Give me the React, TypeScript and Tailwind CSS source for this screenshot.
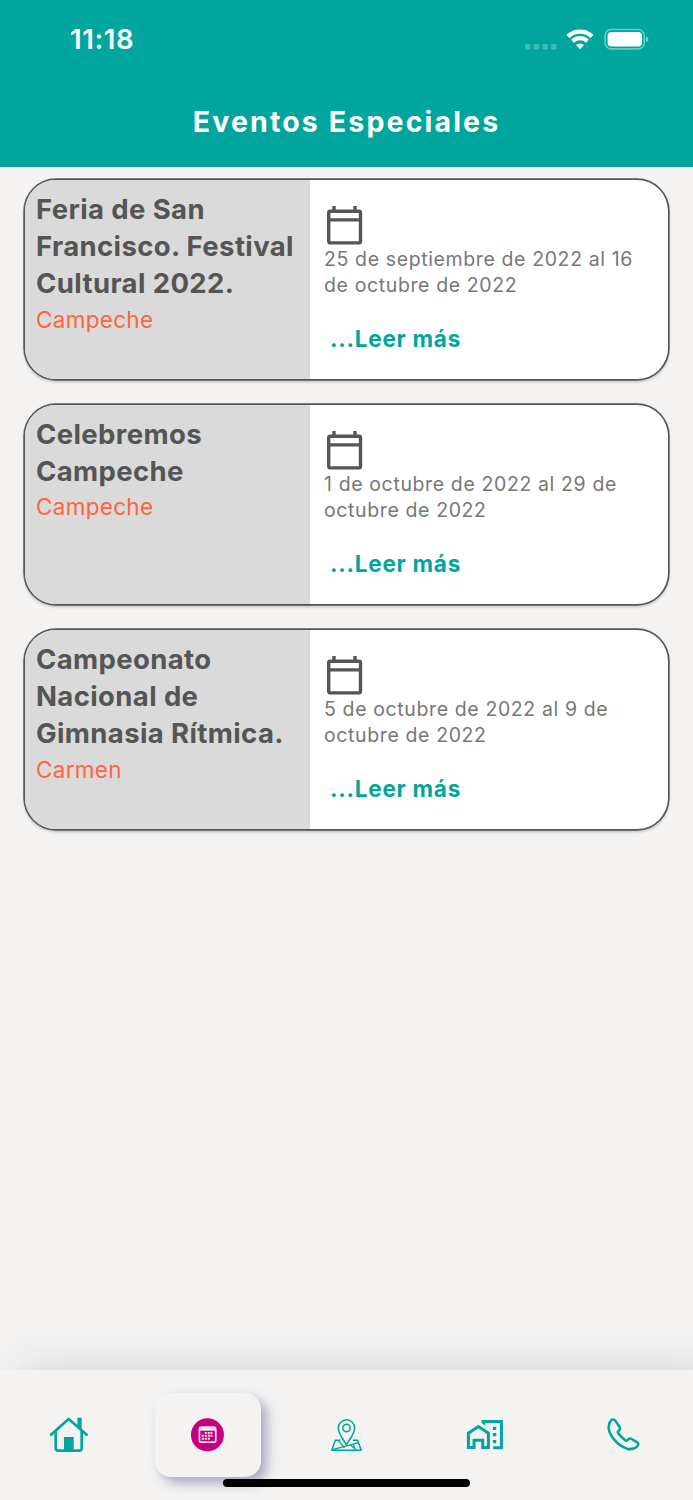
import type { ReactNode } from "react";

const events = [
  {
    id: 1,
    title: ["Feria de San", "Francisco. Festival", "Cultural 2022."],
    city: "Campeche",
    date: ["25 de septiembre de 2022 al 16", "de octubre de 2022"],
  },
  {
    id: 2,
    title: ["Celebremos", "Campeche"],
    city: "Campeche",
    date: ["1 de octubre de 2022 al 29 de", "octubre de 2022"],
  },
  {
    id: 3,
    title: ["Campeonato", "Nacional de", "Gimnasia Rítmica."],
    city: "Carmen",
    date: ["5 de octubre de 2022 al 9 de", "octubre de 2022"],
  },
];

const StatusBar = () => {
  return (
    <div className="flex h-[78px] items-center justify-between pl-[70px] pr-[44px]">
      <span className="pt-[2px] text-[27.5px] leading-none font-semibold tracking-[0.6px]">11:18</span>
      <div className="flex items-center">
        <svg width="32" height="8" viewBox="0 0 32 8" className="mt-[15px] mr-[9px]" fill="#fff" fillOpacity="0.25">
          <rect x="0" y="1" width="5.4" height="5.4" rx="1.3" />
          <rect x="8.7" y="1" width="5.4" height="5.4" rx="1.3" />
          <rect x="17.4" y="1" width="5.4" height="5.4" rx="1.3" />
          <rect x="26" y="1" width="5.4" height="5.4" rx="1.3" />
        </svg>
        <svg width="28" height="22" viewBox="0 0 28 22" className="mr-[10px]" fill="none" stroke="#fff" strokeWidth="4.2">
          <path d="M2 8.500a17.200 17.200 0 0 1 24 0" />
          <path d="M6.600 13.200a10.600 10.600 0 0 1 14.800 0" />
          <path d="M14 21.300l-4-4.300a6 6 0 0 1 8 0z" fill="#fff" stroke="none" />
        </svg>
        <svg width="45" height="22" viewBox="0 0 45 22">
          <rect x="1.2" y="1.5" width="39" height="19.4" rx="6" fill="none" stroke="#fff" strokeOpacity="0.4" strokeWidth="1.6" />
          <rect x="3.6" y="4" width="34.4" height="14.6" rx="3.8" fill="#fff" />
          <path d="M41.900 8.300c3 1 3 5 0 6z" fill="#fff" fillOpacity="0.5" />
        </svg>
      </div>
    </div>
  );
};

const CalendarIcon = () => {
  return (
    <svg width="37" height="39" viewBox="0 0 37 39" fill="none" stroke="#555" strokeWidth="3.4">
      <rect x="2.7" y="5.3" width="31.8" height="31.6" rx="1.6" />
      <path d="M2.7 13.900h31.800M8 0v5M29 0v5" />
    </svg>
  );
};

const EventCard = ({ event }: { event: (typeof events)[number] }) => {
  return (
    <div className="flex h-[199px] overflow-hidden rounded-[31px] bg-white shadow-[0_0_0_1.7px_#575557,0_2px_3px_1px_rgba(0,0,0,0.22)]">
      <div className="w-[285px] shrink-0 bg-[#dadada] pt-[11px] pl-[11px]">
        <h2 className="text-[27.5px] leading-[37.2px] font-bold whitespace-nowrap tracking-[0.38px] text-[#555]">
          {event.title.map((line) => (
            <span className="block" key={line}>
              {line}
            </span>
          ))}
        </h2>
        <p className="-mt-[1px] text-[22.5px] leading-[35px] tracking-[0.3px] text-[#ff6340]">{event.city}</p>
      </div>
      <div className="pt-[26px] pl-[14px]">
        <div className="pl-[2px]">
          <CalendarIcon />
        </div>
        <p className="mt-[1px] text-[19.5px] leading-[26px] whitespace-nowrap tracking-[0.62px] text-[#777]">
          {event.date.map((line) => (
            <span className="block" key={line}>
              {line}
            </span>
          ))}
        </p>
        <button className="mt-[26px] ml-[6px] block text-[22.5px] leading-[30px] font-bold tracking-[0.75px] text-[#00a59e]">
          ...Leer más
        </button>
      </div>
    </div>
  );
};

const NavItem = ({ active, label, children }: { active?: boolean; label: string; children: ReactNode }) => {
  return (
    <div className="flex flex-1 items-center justify-center">
      <button
        aria-label={label}
        className={
          active
            ? "flex h-[84px] w-[106px] items-center justify-center rounded-2xl bg-[#f4f3f2] shadow-[6px_6px_12px_rgba(70,65,125,0.42)]"
            : "flex h-[84px] w-[106px] items-center justify-center"
        }
      >
        {children}
      </button>
    </div>
  );
};

const NavBar = () => {
  return (
    <nav className="relative flex h-[130px] bg-[#f4f3f2] shadow-[20px_-3px_44px_rgba(70,55,105,0.16)]">
      <NavItem label="Inicio">
        <svg width="60" height="60" viewBox="-2.1 15 180 180" fill="none" stroke="#00a59e" strokeWidth="8" strokeLinejoin="round" strokeLinecap="round">
          <path d="M34 104L87 57l54 47" />
          <path d="M48 95v50q0 7 7 7h64q7 0 7-7V95" />
          <path d="M73 111h29v42H73zM113 53h13v36l-13-12z" fill="#00a59e" stroke="none" />
        </svg>
      </NavItem>
      <NavItem label="Eventos" active>
        <svg width="60" height="60" viewBox="-5.3 0 180 180">
          <circle cx="83" cy="89.5" r="49.5" fill="#c4007f" />
          <rect x="59" y="66.5" width="49" height="45" rx="6" fill="none" stroke="#f9dff0" strokeWidth="5" />
          <path d="M59 68h49v9H59z" fill="#fbeaf5" />
          <path
            d="M75 84h6M84 84h6M92 84h6M66 92.500h6M75 92.500h6M84 92.500h6M92 92.500h6M66 101.500h6M75 101.500h6M84 101.500h6"
            stroke="#f9dff0"
            strokeWidth="6"
          />
        </svg>
      </NavItem>
      <NavItem label="Mapa">
        <svg width="60" height="60" viewBox="-12 0 180 180" fill="none" stroke="#00a59e" strokeWidth="4.6" strokeLinejoin="round">
          <path d="M79 120C72 105 55 88 55 69a24.500 24.500 0 0 1 49 0c0 19-18 36-25 51z" />
          <circle cx="79.500" cy="69" r="11" />
          <path d="M61 106H46L35.500 135.500h88L113 106H98" />
          <path d="M55 107l19 22M37 134l80-21M92 121l17 14M100 117l5 16" strokeWidth="4" />
        </svg>
      </NavItem>
      <NavItem label="Hospedaje">
        <svg width="60" height="60" viewBox="0.3 0 180 180" fill="none" stroke="#00a59e" strokeWidth="9">
          <path d="M40.500 127.500V84.500L70.500 64.500l30 20v43H83.500v-22h-26v22z" />
          <path d="M80 45h64v88h-29v-9h20V54H91v8l-11-8z" fill="#00a59e" stroke="none" />
          <path d="M114 65h10v10h-10zM114 84h10v10h-10zM114 105h10v10h-10z" fill="#00a59e" stroke="none" />
        </svg>
      </NavItem>
      <NavItem label="Contacto">
        <svg width="60" height="60" viewBox="-3.9 0 180 180" fill="none" stroke="#00a59e" strokeWidth="7.5" strokeLinejoin="round">
          <path d="M47 46Q54 41 60 47L73 66Q76 71 72 76Q65 79 69 85Q79 97 90 106Q95 109 98 104Q103 98 109 102L126 112Q131 117 127 123Q115 136 95 131C67 122 41 91 40 68Q40 54 47 46z" />
        </svg>
      </NavItem>
      <div className="absolute bottom-[13px] left-[223px] h-[8px] w-[247px] rounded-full bg-black" />
    </nav>
  );
};

const App = () => {
  return (
    <div className="flex h-[1500px] w-[693px] flex-col overflow-hidden bg-[#f4f3f2] font-['Inter',sans-serif]">
      <header className="h-[167px] shrink-0 bg-[#00a59e] text-white">
        <StatusBar />
        <h1 className="mt-[26px] text-center text-[28.5px] leading-[36px] font-bold tracking-[2.15px]">
          Eventos Especiales
        </h1>
      </header>
      <main className="flex flex-1 flex-col gap-[26px] px-[25px] pt-[13px]">
        {events.map((event) => (
          <EventCard key={event.id} event={event} />
        ))}
      </main>
      <NavBar />
    </div>
  );
};

export default App;
